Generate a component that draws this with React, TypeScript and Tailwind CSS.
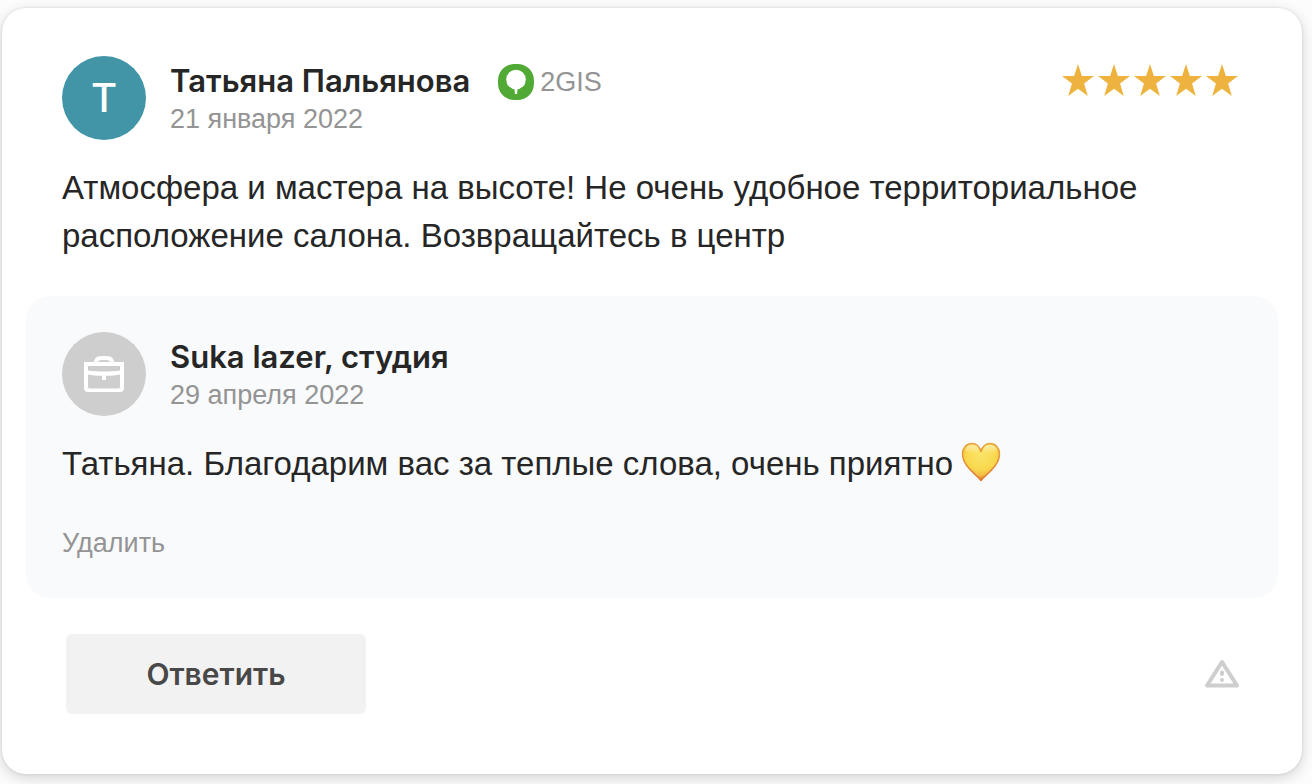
import type { ReactNode } from 'react';

function Star() {
  return (
    <svg viewBox="0 0 32 32" className="size-8" fill="#edb33e">
      <path d="M16 0l3.900 12H32l-9.900 7.500L25.800 32 16 24.700 6.200 32l3.700-12.500L0 12h12.100z" />
    </svg>
  );
}

function GisLogo() {
  return (
    <svg viewBox="0 0 36 36" className="size-9" aria-hidden="true">
      <path
        d="M18 0C21 0 24 .3 26.500 1.500 30 3 33 6 34.500 9.500 35.700 12 36 15 36 18S35.700 24 34.500 26.500C33 30 30 33 26.500 34.500 24 35.700 21 36 18 36S12 35.700 9.500 34.500C6 33 3 30 1.500 26.500 .3 24 0 21 0 18S.3 12 1.500 9.500C3 6 6 3 9.500 1.500 12 .3 15 0 18 0z"
        fill="#50aa35"
      />
      <circle cx="18" cy="15.500" r="9.800" fill="#fff" />
      <path d="M9 18.500c.2 1.300.5 2.200 1 3.300 4-.1 6.300 1.200 6.600 4.200l.3 4h2.200l.3-4c.3-3 2.600-4.300 6.600-4.200.5-1.100.8-2 1-3.300z" fill="#fff" />
    </svg>
  );
}

function Briefcase() {
  return (
    <svg viewBox="0 0 40 36" className="h-9 w-10" fill="none" aria-hidden="true">
      <path
        d="M0 6h40v26a4 4 0 0 1-4 4H4a4 4 0 0 1-4-4zM4 10v4.500c9 1.300 23 1.300 32 0V10zM4 18.500V31a1.500 1.500 0 0 0 1.500 1.500h29A1.500 1.500 0 0 0 36 31V18.500c-4.500.8-9 1.200-14 1.300V24h-4v-4.200c-5-.1-9.500-.5-14-1.300z"
        fill="#fff"
        fillRule="evenodd"
      />
      <path d="M11.500 7.500C12 3.800 13.800 2 17 2h6c3.200 0 5 1.800 5.500 5.500" stroke="#fff" strokeWidth="4" />
    </svg>
  );
}

function YellowHeart() {
  return (
    <svg viewBox="0 0 40 40" className="size-10" role="img" aria-label="💛">
      <defs>
        <radialGradient id="heartFill" cx=".5" cy=".3" r=".68">
          <stop offset="0" stopColor="#fbe36a" />
          <stop offset=".6" stopColor="#f8d84c" />
          <stop offset=".82" stopColor="#f3bd48" />
          <stop offset="1" stopColor="#e07a28" />
        </radialGradient>
        <linearGradient id="heartEdge" x1="0" y1="0" x2="0" y2="1">
          <stop offset="0" stopColor="#e8a544" />
          <stop offset="1" stopColor="#df7527" />
        </linearGradient>
        <linearGradient id="heartGloss" x1="0" y1="0" x2="0" y2="1">
          <stop offset="0" stopColor="#fff" stopOpacity=".5" />
          <stop offset="1" stopColor="#fff" stopOpacity="0" />
        </linearGradient>
      </defs>
      <path
        d="M20 9.500C18.500 4.500 15.500 1.500 11 1.500 5.500 1.500 1.500 6 1.500 12 1.500 18 4.500 23 9.500 28c4 4 8 7.500 10.500 10.500 2.500-3 6.500-6.500 10.500-10.500 5-5 8-10 8-16 0-6-4-10.500-9.500-10.500-4.500 0-7.500 3-9 8z"
        fill="url(#heartFill)"
        stroke="url(#heartEdge)"
        strokeWidth="1.500"
        strokeLinejoin="round"
      />
      <ellipse cx="11" cy="7.500" rx="6.500" ry="4.500" fill="url(#heartGloss)" />
      <ellipse cx="29" cy="7.500" rx="6.500" ry="4.500" fill="url(#heartGloss)" />
    </svg>
  );
}

function Author({ avatar, color, name, date, source }: {
  avatar: ReactNode;
  color: string;
  name: string;
  date: string;
  source?: ReactNode;
}) {
  return (
    <div className="flex gap-6">
      <div className={`flex size-[84px] shrink-0 items-center justify-center rounded-full font-['Inter',sans-serif] text-[40px] font-medium text-white ${color}`}>
        {avatar}
      </div>
      <div className="pt-1">
        <div className="flex items-center gap-7">
          <h2 className="font-['Inter',sans-serif] text-[31px] leading-[42px] font-semibold">{name}</h2>
          {source}
        </div>
        <time className="block text-[27px] leading-[34px] text-[#949494]">{date}</time>
      </div>
    </div>
  );
}

export default function App() {
  return (
    <main className="bg-[#fcfcfc] pt-2 pr-2.5 pb-2.5 pl-0.5 font-['Liberation_Sans',Arial,sans-serif] text-[#262626]">
      <article className="rounded-3xl bg-white px-6 pt-12 pb-[60px] shadow-[0_4px_14px_rgba(0,0,0,0.16),0_0_3px_rgba(0,0,0,0.12)]">
        <header className="flex items-start justify-between px-9">
          <Author
            avatar="Т"
            color="bg-[#4295a6]"
            name="Татьяна Пальянова"
            date="21 января 2022"
            source={
              <span className="flex items-center gap-1.5 pt-0.5 text-[27px] leading-9 text-[#949494]">
                <GisLogo />
                2GIS
              </span>
            }
          />
          <div className="flex gap-1 pt-2 pr-1" role="img" aria-label="5 из 5">
            <Star />
            <Star />
            <Star />
            <Star />
            <Star />
          </div>
        </header>
        <p className="mt-6 px-9 text-[33px] leading-[48px]">
          Атмосфера и мастера на высоте! Не очень удобное территориальное расположение салона. Возвращайтесь в центр
        </p>
        <section className="mt-9 rounded-3xl bg-[#f9fafc] px-9 pt-9 pb-8">
          <Author
            avatar={<Briefcase />}
            color="bg-[#cecece]"
            name="Suka lazer, студия"
            date="29 апреля 2022"
          />
          <div className="mt-6 flex items-start gap-2">
            <p className="text-[33px] leading-[48px]">
              Татьяна. Благодарим вас за теплые слова, очень приятно
            </p>
            <span className="shrink-0 pt-0.5">
              <YellowHeart />
            </span>
          </div>
          <button type="button" className="mt-8 block text-[27px] leading-[46px] text-[#949494]">
            Удалить
          </button>
        </section>
        <footer className="mt-9 flex items-center justify-between pr-9 pl-10">
          <button type="button" className="h-20 w-[300px] rounded-md bg-[#f2f2f2] font-['Inter',sans-serif] text-[30px] font-semibold text-[#484848]">
            Ответить
          </button>
          <button type="button" aria-label="Пожаловаться">
            <svg viewBox="0 0 40 30" className="h-[30px] w-10" fill="none" stroke="#cecece" aria-hidden="true">
              <path d="M20 3L35 26.500H5z" strokeWidth="4" strokeLinejoin="round" />
              <path d="M20 13.500v1.500M20 20.900v.2" strokeWidth="4" strokeLinecap="round" />
            </svg>
          </button>
        </footer>
      </article>
    </main>
  );
}
